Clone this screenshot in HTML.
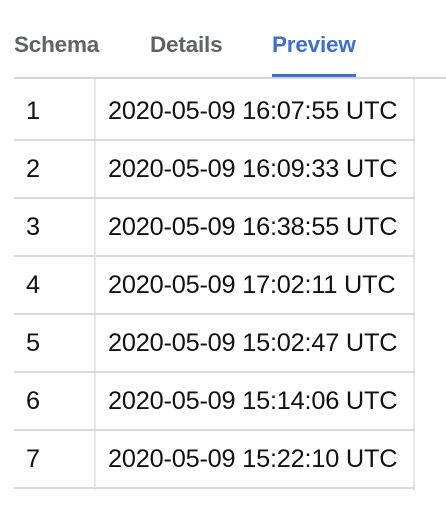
<!DOCTYPE html>
<html><head><style>
body{margin:0;width:446px;height:506px;background:#fff;font-family:"Liberation Sans",sans-serif;position:relative;overflow:hidden}
.tab{position:absolute;top:32px;font-size:22.5px;font-weight:bold;color:#5f6368;letter-spacing:-0.2px}
.ul{position:absolute;left:272px;top:74px;width:84px;height:4px;background:#3b6fd4}
.gl{position:absolute;left:14px;top:77px;width:432px;height:2px;background:#d5d5d5}
.vl{position:absolute;top:79px;height:411px;width:2px;background:#e8e8e8}
.hl{position:absolute;left:14px;width:401px;height:2px;background:#dadada}
.t{position:absolute;font-size:25.3px;color:#111;line-height:30px;letter-spacing:-0.2px}
</style></head><body>
<div class="tab" style="left:14px">Schema</div>
<div class="tab" style="left:150px">Details</div>
<div class="tab" style="left:272px;color:#3b6fd4">Preview</div>
<div class="ul"></div><div class="gl"></div>
<div class="vl" style="left:94px"></div><div class="vl" style="left:413px"></div>
<div class="hl" style="top:139px"></div>
<div class="hl" style="top:197px"></div>
<div class="hl" style="top:255px"></div>
<div class="hl" style="top:313px"></div>
<div class="hl" style="top:371px"></div>
<div class="hl" style="top:429px"></div>
<div class="hl" style="top:487px"></div>
<div class="t" style="left:26px;top:96px">1</div><div class="t" style="left:108px;top:96px">2020-05-09 16:07:55 UTC</div>
<div class="t" style="left:26px;top:154px">2</div><div class="t" style="left:108px;top:154px">2020-05-09 16:09:33 UTC</div>
<div class="t" style="left:26px;top:212px">3</div><div class="t" style="left:108px;top:212px">2020-05-09 16:38:55 UTC</div>
<div class="t" style="left:26px;top:270px">4</div><div class="t" style="left:108px;top:270px">2020-05-09 17:02:11 UTC</div>
<div class="t" style="left:26px;top:328px">5</div><div class="t" style="left:108px;top:328px">2020-05-09 15:02:47 UTC</div>
<div class="t" style="left:26px;top:386px">6</div><div class="t" style="left:108px;top:386px">2020-05-09 15:14:06 UTC</div>
<div class="t" style="left:26px;top:444px">7</div><div class="t" style="left:108px;top:444px">2020-05-09 15:22:10 UTC</div>
</body></html>
